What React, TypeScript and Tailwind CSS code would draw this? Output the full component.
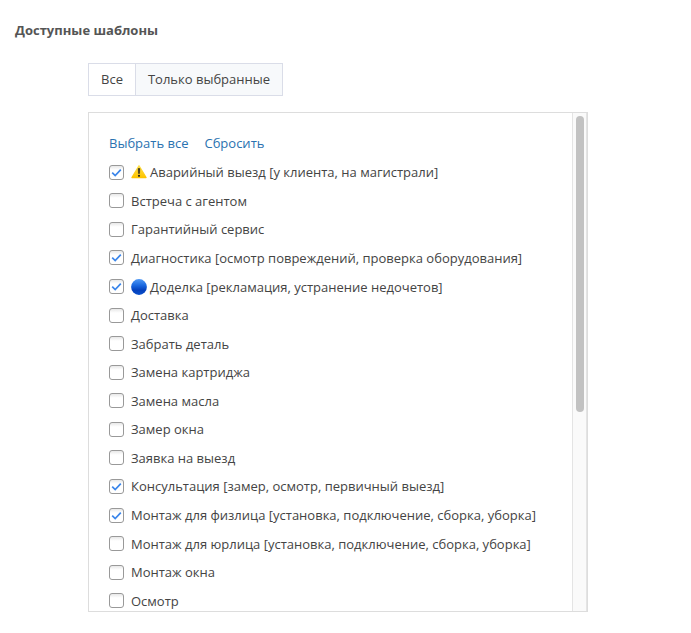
import { useState } from "react";

type Template = { label: string; icon?: "warning" | "circle"; checked?: boolean };

const templates: Template[] = [
  { label: "Аварийный выезд [у клиента, на магистрали]", icon: "warning", checked: true },
  { label: "Встреча с агентом" },
  { label: "Гарантийный сервис" },
  { label: "Диагностика [осмотр повреждений, проверка оборудования]", checked: true },
  { label: "Доделка [рекламация, устранение недочетов]", icon: "circle", checked: true },
  { label: "Доставка" },
  { label: "Забрать деталь" },
  { label: "Замена картриджа" },
  { label: "Замена масла" },
  { label: "Замер окна" },
  { label: "Заявка на выезд" },
  { label: "Консультация [замер, осмотр, первичный выезд]", checked: true },
  { label: "Монтаж для физлица [установка, подключение, сборка, уборка]", checked: true },
  { label: "Монтаж для юрлица [установка, подключение, сборка, уборка]" },
  { label: "Монтаж окна" },
  { label: "Осмотр" },
];

function WarningIcon() {
  return (
    <svg viewBox="0 0 16 16" className="mr-[3px] size-4 shrink-0" aria-hidden="true">
      <defs>
        <linearGradient id="warn" x1="0" y1="0" x2="0" y2="1">
          <stop offset="0" stopColor="#ffe04a" />
          <stop offset="1" stopColor="#fdc400" />
        </linearGradient>
      </defs>
      <path d="M8 1.8 15 13.500H1Z" fill="url(#warn)" stroke="url(#warn)" strokeWidth="1.4" strokeLinejoin="round" />
      <path d="M7.200 4.500h1.600l-.3 5H7.500Z" fill="#222" stroke="#222" strokeWidth=".5" strokeLinejoin="round" />
      <circle cx="8" cy="11.800" r="1.100" fill="#222" />
    </svg>
  );
}

function CircleIcon() {
  return (
    <svg viewBox="0 0 16 16" className="mr-[3px] size-4 shrink-0" aria-hidden="true">
      <defs>
        <linearGradient id="ball" x1="0" y1="0" x2="0" y2="1">
          <stop offset="0" stopColor="#4f98f4" />
          <stop offset=".4" stopColor="#1a68e0" />
          <stop offset=".7" stopColor="#0440bc" />
          <stop offset="1" stopColor="#0a50cc" />
        </linearGradient>
      </defs>
      <circle cx="8" cy="8" r="7.900" fill="url(#ball)" />
    </svg>
  );
}

function Row({ item, checked, onToggle }: { item: Template; checked: boolean; onToggle: () => void }) {
  return (
    <li className="flex items-center">
      <label className="flex items-center">
        <span className="mr-[7px] grid size-[15px] shrink-0">
          <input
            type="checkbox"
            checked={checked}
            onChange={onToggle}
            className="col-start-1 row-start-1 m-0 size-[15px] appearance-none rounded-[3px] border border-[#999] bg-linear-to-b from-[#e8e8e8] to-white to-30%"
          />
          {checked && (
            <svg viewBox="0 0 15 15" className="pointer-events-none col-start-1 row-start-1 size-[15px]" aria-hidden="true">
              <path d="M3.200 7.700 6.200 10.600 11.800 4.700" fill="none" stroke="#3b86ea" strokeWidth="1.700" />
            </svg>
          )}
        </span>
        {item.icon === "warning" && <WarningIcon />}
        {item.icon === "circle" && <CircleIcon />}
        <span className="whitespace-nowrap">{item.label}</span>
      </label>
    </li>
  );
}

export default function App() {
  const [selected, setSelected] = useState(templates.map((t) => !!t.checked));
  const [onlySelected, setOnlySelected] = useState(false);

  return (
    <main className="bg-white px-[15px] pt-5 font-['Open_Sans','Noto_Sans',sans-serif] text-[13px] leading-5 text-[#444]">
      <h1 className="font-bold text-[#555]">Доступные шаблоны</h1>
      <div className="mt-[23px] ml-[73px] max-w-[500px]">
        <div className="inline-flex border border-[#dadde8] align-top">
          <button type="button" onClick={() => setOnlySelected(false)} className="bg-white px-3 pt-[5px] pb-1.5">
            Все
          </button>
          <button
            type="button"
            onClick={() => setOnlySelected(true)}
            className="border-l border-[#dadde8] bg-[#f7f9fb] px-3 pt-[5px] pb-1.5"
          >
            Только выбранные
          </button>
        </div>
        <section className="mt-4 flex h-[500px] overflow-hidden border border-[#ddd]">
          <div className="min-w-0 flex-1 px-5 pt-5">
            <div className="flex gap-4 text-[#2a72b0]">
              <button type="button" onClick={() => setSelected(templates.map(() => true))}>
                Выбрать все
              </button>
              <button type="button" onClick={() => setSelected(templates.map(() => false))}>
                Сбросить
              </button>
            </div>
            <ul className="mt-[5px] grid h-[457px] grid-rows-16">
              {templates.map((item, i) =>
                onlySelected && !selected[i] ? null : (
                  <Row
                    key={item.label}
                    item={item}
                    checked={selected[i]}
                    onToggle={() => setSelected(selected.map((v, j) => (j === i ? !v : v)))}
                  />
                ),
              )}
            </ul>
          </div>
          <div className="w-[15px] shrink-0 border-x border-[#e4e4e4] bg-[#fafafa] px-[3px] pt-[3px]">
            <div className="ml-auto h-[296px] w-2 rounded-full bg-[#c2c2c2]" />
          </div>
        </section>
      </div>
    </main>
  );
}
